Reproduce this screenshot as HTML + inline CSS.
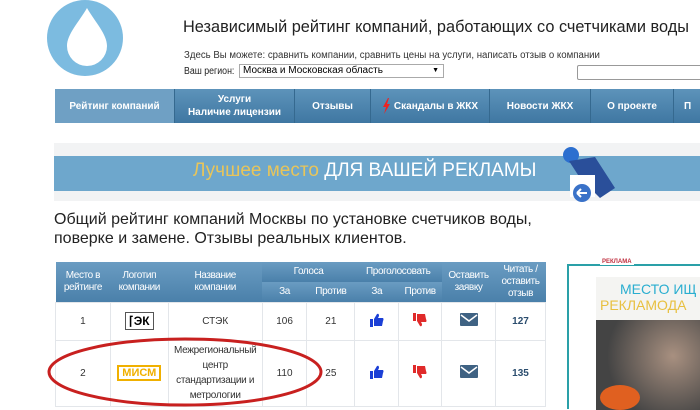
<!DOCTYPE html>
<html><head><meta charset="utf-8"><style>
*{margin:0;padding:0;box-sizing:border-box}
body{width:700px;height:405px;overflow:hidden;background:#fff;font-family:"Liberation Sans",Arial,sans-serif;position:relative}
.a{position:absolute;white-space:nowrap}
.nav{left:55px;top:89px;width:660px;height:34px;background:linear-gradient(#5d93ba,#3f77a2)}
.ni{position:absolute;top:0;height:34px;color:#fff;font-size:10px;font-weight:bold;display:flex;align-items:center;justify-content:center;text-align:center;line-height:13px;border-right:1px solid #35698f}
table{border-collapse:collapse;position:absolute;left:55px;top:262px;width:491px;font-size:10px}
th{background:linear-gradient(#6a9cc2,#4a80aa);color:#fff;font-weight:normal;line-height:12px;height:20px;letter-spacing:-0.4px}
td{border:1px solid #e3e6ea;text-align:center;color:#333;background:#fff}
.n{transform-origin:0 0;transform:scaleX(.88)}
</style></head><body>
<svg class="a" style="left:45px;top:0" width="80" height="80"><circle cx="40" cy="38" r="38" fill="#7cbbe0"/><path d="M42 8 C50 22 62 34 62 46 A20 20 0 0 1 22 46 C22 34 34 22 42 8Z" fill="#fff"/></svg>
<div class="a n" style="left:183px;top:17px;font-size:17px;color:#222;transform:scaleX(.96)">Независимый рейтинг компаний, работающих со счетчиками воды</div>
<div class="a n" style="left:184px;top:50px;font-size:10px;color:#333;transform:scaleX(.965)">Здесь Вы можете: сравнить компании, сравнить цены на услуги, написать отзыв о компании</div>
<div class="a n" style="left:184px;top:66px;font-size:10px;color:#222">Ваш регион:</div>
<div class="a" style="left:239px;top:64px;width:205px;height:14px;border:1px solid #aaa;font-size:10px;padding-left:3px;line-height:12px">Москва и Московская область<span style="position:absolute;right:4px;font-size:7px">▼</span></div>
<div class="a" style="left:577px;top:65px;width:130px;height:15px;border:1px solid #999;border-radius:2px"></div>
<div class="a nav">
<div class="ni" style="left:0;width:120px;background:#6fa0c4">Рейтинг компаний</div>
<div class="ni" style="left:120px;width:120px">Услуги<br>Наличие лицензии</div>
<div class="ni" style="left:240px;width:76px">Отзывы</div>
<div class="ni" style="left:316px;width:119px"><svg width="9" height="16" style="margin-right:3px"><path d="M6 0 L1 9 H4 L2 16 L8 6 H5 L7 0Z" fill="#e22"/></svg>Скандалы в ЖКХ</div>
<div class="ni" style="left:435px;width:101px">Новости ЖКХ</div>
<div class="ni" style="left:536px;width:83px">О проекте</div>
<div class="ni" style="left:619px;width:60px;justify-content:flex-start;padding-left:10px">П</div>
</div>
<div class="a" style="left:54px;top:143px;width:646px;height:58px;background:#f2f3f4"></div>
<div class="a" style="left:54px;top:156px;width:646px;height:35px;background:#6ea7cc"></div>
<div class="a" style="left:193px;top:160px;font-size:19px;color:#fff"><span style="color:#e8c55a">Лучшее место</span> ДЛЯ ВАШЕЙ РЕКЛАМЫ</div>
<svg class="a" style="left:555px;top:143px" width="75" height="60"><circle cx="16" cy="12" r="8" fill="#2c6fcf"/><path d="M14 18 L40 14 L60 45 L45 55 L25 35Z" fill="#2a4f9a"/><rect x="15" y="32" width="25" height="22" fill="#fff"/><circle cx="27" cy="50" r="9" fill="#3a72c8"/><path d="M22 50 h10 M22 50 l4 -4 M22 50 l4 4" stroke="#fff" stroke-width="2"/></svg>
<div class="a" style="left:54px;top:210px;font-size:16px;line-height:19px;color:#222">Общий рейтинг компаний Москвы по установке счетчиков воды,<br>поверке и замене. Отзывы реальных клиентов.</div>
<table>
<colgroup><col style="width:55px"><col style="width:58px"><col style="width:94px"><col style="width:45px"><col style="width:48px"><col style="width:44px"><col style="width:43px"><col style="width:54px"><col style="width:50px"></colgroup>
<tr><th rowspan="2">Место в<br>рейтинге</th><th rowspan="2">Логотип<br>компании</th><th rowspan="2">Название<br>компании</th><th colspan="2">Голоса</th><th colspan="2">Проголосовать</th><th rowspan="2">Оставить<br>заявку</th><th rowspan="2">Читать /<br>оставить<br>отзыв</th></tr>
<tr><th>За</th><th>Против</th><th>За</th><th>Против</th></tr>
<tr style="height:38px"><td>1</td><td><span style="display:inline-block;border:1px solid #555;padding:1px 3px;font-weight:bold;font-size:12px;color:#000">⌈ЭК</span></td><td>СТЭК</td><td>106</td><td>21</td>
<td><svg width="14" height="14"><rect x="0" y="6" width="3" height="8" fill="#1b3fd6"/><path d="M4 6 L7 1 Q9 0 9 3 L8 5 H13 Q14 6 13 8 L12 13 H4Z" fill="#1b3fd6"/></svg></td>
<td><svg width="14" height="14"><rect x="0" y="0" width="3" height="8" fill="#e02a2a"/><path d="M4 8 L7 13 Q9 14 9 11 L8 9 H13 Q14 8 13 6 L12 1 H4Z" fill="#e02a2a"/></svg></td>
<td><svg width="18" height="13"><rect width="18" height="13" rx="1" fill="#3f6283"/><path d="M1 2 L9 8 L17 2" stroke="#fff" stroke-width="1.5" fill="none"/></svg></td><td style="font-weight:bold;color:#2b4d6e">127</td></tr>
<tr style="height:66px"><td>2</td><td><span style="display:inline-block;border:2px solid #f0b000;padding:0 3px;font-weight:bold;font-size:11px;color:#f0b000">МИСМ</span></td><td style="line-height:15px;letter-spacing:-0.3px">Межрегиональный<br>центр<br>стандартизации и<br>метрологии</td><td>110</td><td>25</td>
<td><svg width="14" height="14"><rect x="0" y="6" width="3" height="8" fill="#1b3fd6"/><path d="M4 6 L7 1 Q9 0 9 3 L8 5 H13 Q14 6 13 8 L12 13 H4Z" fill="#1b3fd6"/></svg></td>
<td><svg width="14" height="14"><rect x="0" y="0" width="3" height="8" fill="#e02a2a"/><path d="M4 8 L7 13 Q9 14 9 11 L8 9 H13 Q14 8 13 6 L12 1 H4Z" fill="#e02a2a"/></svg></td>
<td><svg width="18" height="13"><rect width="18" height="13" rx="1" fill="#3f6283"/><path d="M1 2 L9 8 L17 2" stroke="#fff" stroke-width="1.5" fill="none"/></svg></td><td style="font-weight:bold;color:#2b4d6e">135</td></tr>
</table>
<svg class="a" style="left:40px;top:328px" width="300" height="80"><ellipse cx="145" cy="44" rx="136" ry="33" fill="none" stroke="#c8201f" stroke-width="3"/></svg>
<div class="a" style="left:567px;top:264px;width:140px;height:145px;border:2px solid #2aa0a8;border-right:none;border-bottom:none"></div>
<div class="a" style="left:600px;top:259px;background:#fff;padding:0 2px;font-size:6px;font-weight:bold;color:#c03040">РЕКЛАМА</div>
<div class="a" style="left:596px;top:277px;width:110px;height:43px;background:#f4f4f2"></div>
<div class="a" style="left:620px;top:281px;font-size:14px;color:#2aaed0">МЕСТО ИЩ</div>
<div class="a" style="left:600px;top:297px;font-size:14px;color:#e8c040">РЕКЛАМОДА</div>
<div class="a" style="left:596px;top:320px;width:110px;height:90px;background:radial-gradient(circle at 70% 40%,#a89080,#444 70%)"></div>
<div class="a" style="left:600px;top:385px;width:40px;height:25px;border-radius:50%;background:#e06020"></div>
</body></html>
